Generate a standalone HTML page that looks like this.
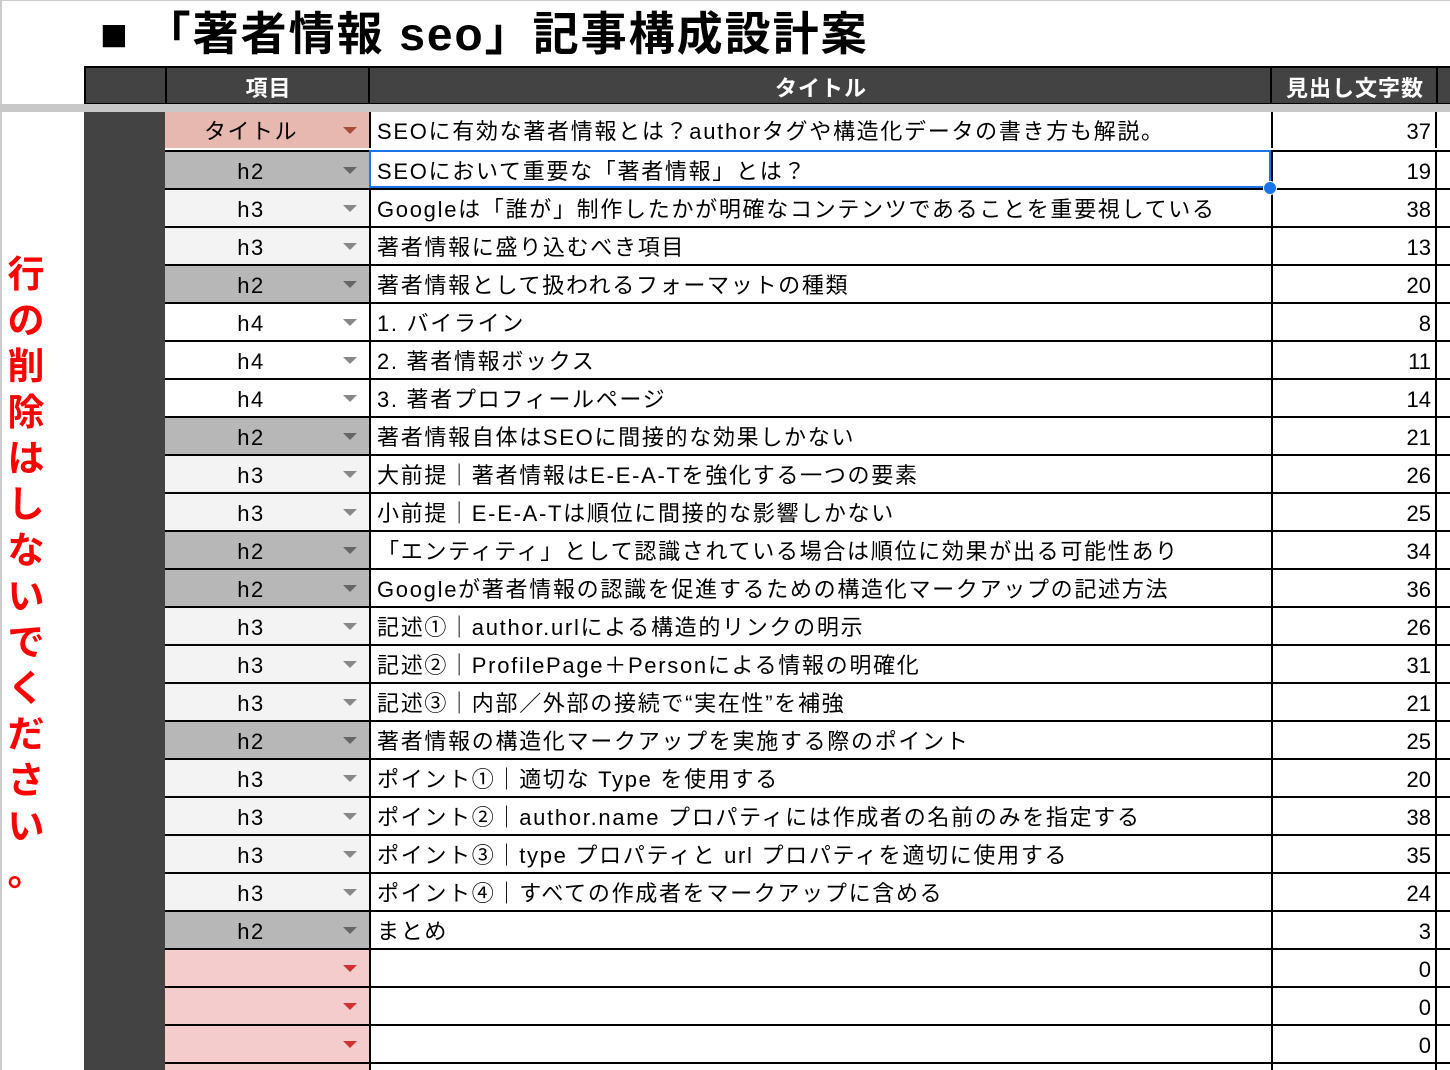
<!DOCTYPE html>
<html><head><meta charset="utf-8"><style>
*{margin:0;padding:0;box-sizing:border-box}
html{width:1450px;height:1070px;overflow:hidden}
body{width:1450px;height:1070px;overflow:hidden;background:#fff;position:relative;font-family:"Liberation Sans","Noto Sans CJK JP",sans-serif;color:#000}
.abs{position:absolute}
.title{left:100px;top:4px;font-size:46px;font-weight:bold;white-space:nowrap;letter-spacing:2px;line-height:60px}
.hdr{top:66px;height:39px;background:#434343;color:#fff;font-weight:bold;font-size:22px;text-align:center;line-height:42px;border:2px solid #000;border-right:none;letter-spacing:1px}
.row{position:absolute;left:165px;width:1285px;height:38px;border-top:2px solid #000}
.b{position:absolute;left:0;top:0;width:204px;height:36px;font-size:22px;line-height:40px}
.b span{position:absolute;left:0;width:172px;text-align:center;letter-spacing:1.5px}
.arr{position:absolute;left:178px;top:15px;width:0;height:0;border-left:7px solid transparent;border-right:7px solid transparent;border-top:7px solid #888}
.c{position:absolute;left:204px;top:0;width:902px;height:36px;border-left:2px solid #000;font-size:22px;line-height:40px;padding-left:6px;white-space:nowrap;overflow:hidden;letter-spacing:1.7px}
.d{position:absolute;left:1106px;top:0;width:166px;height:36px;border-left:2px solid #000;border-right:2px solid #000;font-size:22px;line-height:40px;text-align:right;padding-right:4px}
.t{background:#e6b8af}.t .arr{border-top-color:#a64d3a}
.h2{background:#b7b7b7}.h2 .arr{border-top-color:#666}
.h3{background:#f3f3f3}
.h4{background:#fff}
.e{background:#f4cccc}.e .arr{border-top-color:#d03030}
.red{left:6px;top:252px;width:40px;color:#f00;font-weight:bold;font-size:37px;line-height:46px;text-align:center}
</style></head><body>
<div class="abs" style="left:0;top:0;width:1450px;height:1px;background:#ccc"></div>
<div class="abs" style="left:0;top:0;width:2px;height:1070px;background:#ccc"></div>
<div class="abs title">■ 「著者情報 seo」記事構成設計案</div>
<div class="abs hdr" style="left:84px;width:82px"></div>
<div class="abs hdr" style="left:165px;width:205px">項目</div>
<div class="abs hdr" style="left:368px;width:904px">タイトル</div>
<div class="abs hdr" style="left:1270px;width:168px">見出し文字数</div>
<div class="abs hdr" style="left:1436px;width:14px;border-right:none"></div>
<div class="abs" style="left:0;top:104px;width:1450px;height:8px;background:#c8c8c8"></div>
<div class="abs" style="left:84px;top:112px;width:81px;height:958px;background:#434343"></div>
<div class="abs red">行<br>の<br>削<br>除<br>は<br>し<br>な<br>い<br>で<br>く<br>だ<br>さ<br>い<br>。</div>

<div class="row" style="top:112px;border-top:none"><div class="b t"><span>タイトル</span><i class="arr"></i></div><div class="c">SEOに有効な著者情報とは？authorタグや構造化データの書き方も解説。</div><div class="d">37</div></div>
<div class="row" style="top:150px"><div class="b h2"><span>h2</span><i class="arr"></i></div><div class="c">SEOにおいて重要な「著者情報」とは？</div><div class="d">19</div></div>
<div class="row" style="top:188px"><div class="b h3"><span>h3</span><i class="arr"></i></div><div class="c">Googleは「誰が」制作したかが明確なコンテンツであることを重要視している</div><div class="d">38</div></div>
<div class="row" style="top:226px"><div class="b h3"><span>h3</span><i class="arr"></i></div><div class="c">著者情報に盛り込むべき項目</div><div class="d">13</div></div>
<div class="row" style="top:264px"><div class="b h2"><span>h2</span><i class="arr"></i></div><div class="c">著者情報として扱われるフォーマットの種類</div><div class="d">20</div></div>
<div class="row" style="top:302px"><div class="b h4"><span>h4</span><i class="arr"></i></div><div class="c">1. バイライン</div><div class="d">8</div></div>
<div class="row" style="top:340px"><div class="b h4"><span>h4</span><i class="arr"></i></div><div class="c">2. 著者情報ボックス</div><div class="d">11</div></div>
<div class="row" style="top:378px"><div class="b h4"><span>h4</span><i class="arr"></i></div><div class="c">3. 著者プロフィールページ</div><div class="d">14</div></div>
<div class="row" style="top:416px"><div class="b h2"><span>h2</span><i class="arr"></i></div><div class="c">著者情報自体はSEOに間接的な効果しかない</div><div class="d">21</div></div>
<div class="row" style="top:454px"><div class="b h3"><span>h3</span><i class="arr"></i></div><div class="c">大前提｜著者情報はE-E-A-Tを強化する一つの要素</div><div class="d">26</div></div>
<div class="row" style="top:492px"><div class="b h3"><span>h3</span><i class="arr"></i></div><div class="c">小前提｜E-E-A-Tは順位に間接的な影響しかない</div><div class="d">25</div></div>
<div class="row" style="top:530px"><div class="b h2"><span>h2</span><i class="arr"></i></div><div class="c">「エンティティ」として認識されている場合は順位に効果が出る可能性あり</div><div class="d">34</div></div>
<div class="row" style="top:568px"><div class="b h2"><span>h2</span><i class="arr"></i></div><div class="c">Googleが著者情報の認識を促進するための構造化マークアップの記述方法</div><div class="d">36</div></div>
<div class="row" style="top:606px"><div class="b h3"><span>h3</span><i class="arr"></i></div><div class="c">記述①｜author.urlによる構造的リンクの明示</div><div class="d">26</div></div>
<div class="row" style="top:644px"><div class="b h3"><span>h3</span><i class="arr"></i></div><div class="c">記述②｜ProfilePage＋Personによる情報の明確化</div><div class="d">31</div></div>
<div class="row" style="top:682px"><div class="b h3"><span>h3</span><i class="arr"></i></div><div class="c">記述③｜内部／外部の接続で“実在性”を補強</div><div class="d">21</div></div>
<div class="row" style="top:720px"><div class="b h2"><span>h2</span><i class="arr"></i></div><div class="c">著者情報の構造化マークアップを実施する際のポイント</div><div class="d">25</div></div>
<div class="row" style="top:758px"><div class="b h3"><span>h3</span><i class="arr"></i></div><div class="c">ポイント①｜適切な Type を使用する</div><div class="d">20</div></div>
<div class="row" style="top:796px"><div class="b h3"><span>h3</span><i class="arr"></i></div><div class="c">ポイント②｜author.name プロパティには作成者の名前のみを指定する</div><div class="d">38</div></div>
<div class="row" style="top:834px"><div class="b h3"><span>h3</span><i class="arr"></i></div><div class="c">ポイント③｜type プロパティと url プロパティを適切に使用する</div><div class="d">35</div></div>
<div class="row" style="top:872px"><div class="b h3"><span>h3</span><i class="arr"></i></div><div class="c">ポイント④｜すべての作成者をマークアップに含める</div><div class="d">24</div></div>
<div class="row" style="top:910px"><div class="b h2"><span>h2</span><i class="arr"></i></div><div class="c">まとめ</div><div class="d">3</div></div>
<div class="row" style="top:948px"><div class="b e"><span></span><i class="arr"></i></div><div class="c"></div><div class="d">0</div></div>
<div class="row" style="top:986px"><div class="b e"><span></span><i class="arr"></i></div><div class="c"></div><div class="d">0</div></div>
<div class="row" style="top:1024px"><div class="b e"><span></span><i class="arr"></i></div><div class="c"></div><div class="d">0</div></div>
<div class="row" style="top:1062px;height:8px"><div class="b e" style="height:8px"></div><div class="c" style="height:8px"></div><div class="d" style="height:8px"></div></div>

<div class="abs" style="left:369px;top:150px;width:902px;height:38px;border:2px solid #1a73e8"></div>
<div class="abs" style="left:1263px;top:181px;width:14px;height:14px;border-radius:50%;background:#1a73e8;border:1px solid #fff"></div>
</body></html>
